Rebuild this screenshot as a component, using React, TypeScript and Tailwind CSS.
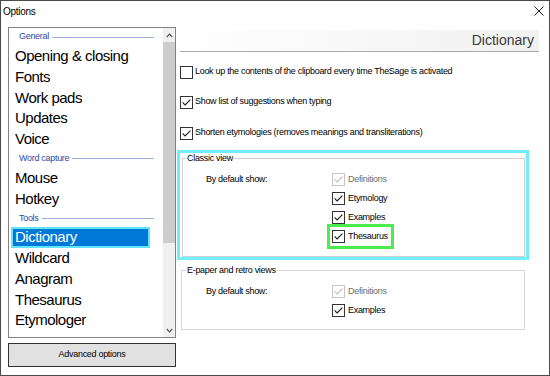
import React from 'react';

type Item = { label: string; kind: 'head' | 'item'; selected?: boolean };

const items: Item[] = [
  { label: 'General', kind: 'head' },
  { label: 'Opening & closing', kind: 'item' },
  { label: 'Fonts', kind: 'item' },
  { label: 'Work pads', kind: 'item' },
  { label: 'Updates', kind: 'item' },
  { label: 'Voice', kind: 'item' },
  { label: 'Word capture', kind: 'head' },
  { label: 'Mouse', kind: 'item' },
  { label: 'Hotkey', kind: 'item' },
  { label: 'Tools', kind: 'head' },
  { label: 'Dictionary', kind: 'item', selected: true },
  { label: 'Wildcard', kind: 'item' },
  { label: 'Anagram', kind: 'item' },
  { label: 'Thesaurus', kind: 'item' },
  { label: 'Etymologer', kind: 'item' },
];

function Check({ checked = true, disabled = false }: { checked?: boolean; disabled?: boolean }) {
  const edge = disabled ? '#c6c6c6' : '#333333';
  const mark = disabled ? '#c0c0c0' : '#1a1a1a';
  return (
    <svg width="13" height="13" viewBox="0 0 13 13" className="shrink-0">
      <rect x="0.5" y="0.5" width="12" height="12" fill="#ffffff" stroke={edge} />
      {checked && <path d="M2.6 6.4 L5.1 9 L10.4 3.6" fill="none" stroke={mark} strokeWidth="1.1" />}
    </svg>
  );
}

function Option({ label, checked = true, disabled = false }: { label: string; checked?: boolean; disabled?: boolean }) {
  return (
    <div className="flex h-[19px] items-center gap-[3px]">
      <Check checked={checked} disabled={disabled} />
      <span className={disabled ? 'text-[#6d6d6d]' : 'text-black'}>{label}</span>
    </div>
  );
}

export default function App() {
  return (
    <div className="flex h-[376px] w-[550px] flex-col border border-[#4a4a4a] bg-white font-['Liberation_Sans',Arial,sans-serif] text-[9px] tracking-[-0.3px] text-black">
      {/* title bar */}
      <div className="flex h-[20px] shrink-0 items-center justify-between pl-[2px] pr-[5px]">
        <span className="text-[10px]">Options</span>
        <svg width="10" height="10" viewBox="0 0 10 10">
          <path d="M0.5 0.5 L9.5 9.5 M9.5 0.5 L0.5 9.5" stroke="#222" strokeWidth="1" />
        </svg>
      </div>

      <div className="flex flex-1 pl-[7px] pt-[6px]">
        {/* left column */}
        <div className="flex w-[168px] shrink-0 flex-col">
          <div className="flex h-[311px] border border-[#828282] bg-white">
            <div className="flex flex-1 flex-col">
              {items.map((it) =>
                it.kind === 'head' ? (
                  <div key={it.label} className="flex h-[18px] shrink-0 items-center pl-[10px] pr-[9px]">
                    <span className="text-[#2b4ca6]">{it.label}</span>
                    <div className="ml-[3px] h-px flex-1 bg-[#9db0de]" />
                  </div>
                ) : it.selected ? (
                  <div key={it.label} className="flex h-[20.75px] shrink-0 items-center">
                    <div className="ml-[2px] flex h-full w-[139px] items-center border-2 border-[#62e4fa] bg-[#0078d7] pl-[2px] text-[15px] tracking-[-0.5px] text-white">
                      {it.label}
                    </div>
                  </div>
                ) : (
                  <div key={it.label} className="flex h-[20.75px] shrink-0 items-center pl-[6px] text-[15px] tracking-[-0.5px]">
                    {it.label}
                  </div>
                )
              )}
            </div>
            {/* scrollbar */}
            <div className="flex w-[12px] flex-col bg-[#f0f0f0]">
              <div className="flex h-[14px] items-center justify-center">
                <svg width="7" height="5" viewBox="0 0 7 5">
                  <path d="M0.8 4 L3.5 1.2 L6.2 4" fill="none" stroke="#555" strokeWidth="1.2" />
                </svg>
              </div>
              <div className="h-[201px] bg-[#cdcdcd]" />
              <div className="flex-1" />
              <div className="flex h-[14px] items-center justify-center">
                <svg width="7" height="5" viewBox="0 0 7 5">
                  <path d="M0.8 1 L3.5 3.8 L6.2 1" fill="none" stroke="#555" strokeWidth="1.2" />
                </svg>
              </div>
            </div>
          </div>
          <button className="mt-[5px] flex h-[24px] items-center justify-center border border-[#333] bg-[#e1e1e1] text-[9px] tracking-[-0.3px]">
            Advanced options
          </button>
        </div>

        {/* right column */}
        <div className="flex flex-1 flex-col">
          <div className="mt-[3px] flex h-[21px] w-[363px] items-center justify-end bg-linear-to-r from-white to-[#f1f1f1] pr-[5px] text-[14px] tracking-normal text-[#3a3a3a]">
            Dictionary
          </div>
          <div className="ml-[4px] h-px w-[359px] bg-[#a8a8a8]" />

          <div className="mt-[13px] flex h-[14px] items-center gap-[2px] pl-[4px]">
            <Check checked={false} />
            <span>Look up the contents of the clipboard every time TheSage is activated</span>
          </div>
          <div className="mt-[16px] flex h-[14px] items-center gap-[2px] pl-[4px]">
            <Check />
            <span>Show list of suggestions when typing</span>
          </div>
          <div className="mt-[17px] flex h-[14px] items-center gap-[2px] pl-[4px]">
            <Check />
            <span>Shorten etymologies (removes meanings and transliterations)</span>
          </div>

          {/* Classic view, highlighted */}
          <div className="ml-[1px] mt-[10px] h-[110px] w-[352px] border-[3px] border-[#72edfb] pl-[2px] pr-[1px]">
            <fieldset className="h-full border border-[#d0d0d0] pl-[23px]">
              <legend className="-ml-[20px] px-[1px] leading-[11px]">Classic view</legend>
              <div className="flex pt-[6px]">
                <div className="flex h-[19px] w-[126px] items-center">By default show:</div>
                <div className="flex flex-col">
                  <Option label="Definitions" disabled />
                  <Option label="Etymology" />
                  <Option label="Examples" />
                  <div className="-ml-[5px] -my-[3px] flex h-[25px] w-[67px] items-center border-[3px] border-[#4bec4b] pl-[2px]">
                    <div className="flex items-center gap-[3px]">
                      <Check />
                      <span>Thesaurus</span>
                    </div>
                  </div>
                </div>
              </div>
            </fieldset>
          </div>

          <fieldset className="ml-[5px] mt-[5px] h-[65px] w-[344px] border border-[#d6d6d6] pl-[24px]">
            <legend className="-ml-[20px] px-[1px] leading-[11px]">E-paper and retro views</legend>
            <div className="flex pt-[6px]">
              <div className="flex h-[19px] w-[126px] items-center">By default show:</div>
              <div className="flex flex-col">
                <Option label="Definitions" disabled />
                <Option label="Examples" />
              </div>
            </div>
          </fieldset>
        </div>
      </div>
    </div>
  );
}
